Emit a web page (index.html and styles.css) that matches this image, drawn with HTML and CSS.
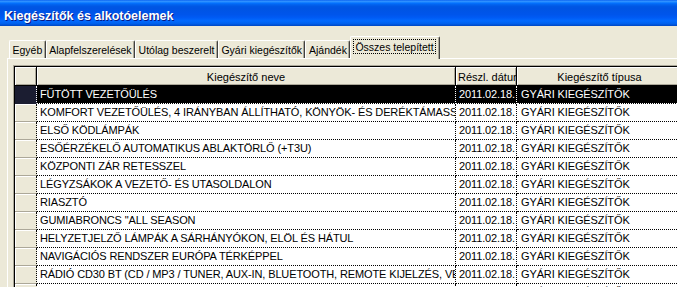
FILE: index.html
```html
<!DOCTYPE html>
<html lang="hu">
<head>
<meta charset="utf-8">
<title>Kiegészítők és alkotóelemek</title>
<link rel="stylesheet" href="styles.css">
</head>
<body>
<div class="window">
  <div class="titlebar">Kiegészítők és alkotóelemek</div>
  <div class="client">
    <div class="tabs">
      <div class="tab">Egyéb</div>
      <div class="tab">Alapfelszerelések</div>
      <div class="tab">Utólag beszerelt</div>
      <div class="tab">Gyári kiegészítők</div>
      <div class="tab">Ajándék</div>
      <div class="tab active"><span class="focus">Összes telepített</span></div>
    </div>
    <div class="pane">
      <div class="grid">
        <div class="grid-inner">
          <div class="row head">
            <div class="cell c-ind"></div>
            <div class="cell c-name center">Kiegészítő neve</div>
            <div class="cell c-date">Részl. dátuma</div>
            <div class="cell c-type center">Kiegészítő típusa</div>
          </div>
          <div class="row selected">
            <div class="cell c-ind"></div>
            <div class="cell c-name">FŰTÖTT VEZETŐÜLÉS</div>
            <div class="cell c-date">2011.02.18.</div>
            <div class="cell c-type">GYÁRI KIEGÉSZÍTŐK</div>
          </div>
          <div class="row">
            <div class="cell c-ind"></div>
            <div class="cell c-name">KOMFORT VEZETŐÜLÉS, 4 IRÁNYBAN ÁLLÍTHATÓ, KÖNYÖK- ÉS DERÉKTÁMASSZAL</div>
            <div class="cell c-date">2011.02.18.</div>
            <div class="cell c-type">GYÁRI KIEGÉSZÍTŐK</div>
          </div>
          <div class="row">
            <div class="cell c-ind"></div>
            <div class="cell c-name">ELSŐ KÖDLÁMPÁK</div>
            <div class="cell c-date">2011.02.18.</div>
            <div class="cell c-type">GYÁRI KIEGÉSZÍTŐK</div>
          </div>
          <div class="row">
            <div class="cell c-ind"></div>
            <div class="cell c-name">ESŐÉRZÉKELŐ AUTOMATIKUS ABLAKTÖRLŐ (+T3U)</div>
            <div class="cell c-date">2011.02.18.</div>
            <div class="cell c-type">GYÁRI KIEGÉSZÍTŐK</div>
          </div>
          <div class="row">
            <div class="cell c-ind"></div>
            <div class="cell c-name">KÖZPONTI ZÁR RETESSZEL</div>
            <div class="cell c-date">2011.02.18.</div>
            <div class="cell c-type">GYÁRI KIEGÉSZÍTŐK</div>
          </div>
          <div class="row">
            <div class="cell c-ind"></div>
            <div class="cell c-name">LÉGYZSÁKOK A VEZETŐ- ÉS UTASOLDALON</div>
            <div class="cell c-date">2011.02.18.</div>
            <div class="cell c-type">GYÁRI KIEGÉSZÍTŐK</div>
          </div>
          <div class="row">
            <div class="cell c-ind"></div>
            <div class="cell c-name">RIASZTÓ</div>
            <div class="cell c-date">2011.02.18.</div>
            <div class="cell c-type">GYÁRI KIEGÉSZÍTŐK</div>
          </div>
          <div class="row">
            <div class="cell c-ind"></div>
            <div class="cell c-name">GUMIABRONCS "ALL SEASON</div>
            <div class="cell c-date">2011.02.18.</div>
            <div class="cell c-type">GYÁRI KIEGÉSZÍTŐK</div>
          </div>
          <div class="row">
            <div class="cell c-ind"></div>
            <div class="cell c-name">HELYZETJELZŐ LÁMPÁK A SÁRHÁNYÓKON, ELÖL ÉS HÁTUL</div>
            <div class="cell c-date">2011.02.18.</div>
            <div class="cell c-type">GYÁRI KIEGÉSZÍTŐK</div>
          </div>
          <div class="row">
            <div class="cell c-ind"></div>
            <div class="cell c-name">NAVIGÁCIÓS RENDSZER EURÓPA TÉRKÉPPEL</div>
            <div class="cell c-date">2011.02.18.</div>
            <div class="cell c-type">GYÁRI KIEGÉSZÍTŐK</div>
          </div>
          <div class="row">
            <div class="cell c-ind"></div>
            <div class="cell c-name">RÁDIÓ CD30 BT (CD / MP3 / TUNER, AUX-IN, BLUETOOTH, REMOTE KIJELZÉS, VEZÉRLÉS)</div>
            <div class="cell c-date">2011.02.18.</div>
            <div class="cell c-type">GYÁRI KIEGÉSZÍTŐK</div>
          </div>
          <div class="row">
            <div class="cell c-ind"></div>
            <div class="cell c-name">TEMPOMAT</div>
            <div class="cell c-date">2011.02.18.</div>
            <div class="cell c-type">GYÁRI KIEGÉSZÍTŐK</div>
          </div>
        </div>
      </div>
    </div>
  </div>
</div>
</body>
</html>
```
FILE: styles.css
```css
html, body {
  margin: 0;
  padding: 0;
  width: 677px;
  height: 287px;
  overflow: hidden;
  background: #ece9d8;
  font-family: "Liberation Sans", Arial, sans-serif;
  color: #000;
}

.window {
  width: 677px;
  height: 287px;
  overflow: hidden;
}

.titlebar {
  height: 26px;
  box-sizing: border-box;
  padding: 8px 0 2px 4px;
  line-height: 16px;
  font-size: 12.5px;
  font-weight: bold;
  color: #fff;
  white-space: nowrap;
  text-shadow: 1px 1px #0a1883;
  background: linear-gradient(to bottom,
    #0058ee 0%, #3593ff 4%, #288eff 7%, #127dff 10%, #036ffc 13%,
    #0262ee 18%, #0057e5 25%, #0054e3 32%, #0055eb 56%, #005bf5 68%,
    #026afe 80%, #0062ef 90%, #0052d6 96%, #0046c0 100%);
}

.client {
  padding-top: 10px;
}

/* Tabs */
.tabs {
  display: flex;
  align-items: flex-end;
  height: 22px;
  padding-left: 9px;
}

.tab {
  height: 18px;
  box-sizing: border-box;
  padding: 2px 2.5px 0;
  line-height: 15px;
  font-size: 10.5px;
  white-space: nowrap;
  border-top: 1px solid #fff;
  border-left: 1px solid #fff;
  border-right: 1px solid #404040;
  border-radius: 2px 2px 0 0;
  box-shadow: inset -1px 0 #aca899;
  background: #ece9d8;
}

.tab.active {
  position: relative;
  z-index: 1;
  height: 23px;
  margin-bottom: -1px;
  padding: 2px 3px 0 2px;
}

.focus {
  display: inline-block;
  padding: 1px 1px 0;
  line-height: 12px;
  border: 1px dotted #000;
}

/* Tab pane */
.pane {
  margin-left: 7px;
  border-top: 1px solid #fff;
  border-left: 1px solid #fff;
  padding: 6px 0 0 5px;
}

/* Grid */
.grid {
  width: max-content;
  border-top: 1px solid #aca899;
  border-left: 1px solid #aca899;
  background: #fff;
}

.grid-inner {
  border-top: 1px solid #000;
  border-left: 1px solid #000;
}

.row {
  display: flex;
}

.cell {
  box-sizing: border-box;
  height: 18px;
  line-height: 17px;
  font-size: 11px;
  letter-spacing: -0.12px;
  white-space: nowrap;
  overflow: hidden;
  border-right: 1px dotted #000;
  border-bottom: 1px dotted #000;
}

.c-ind  { width: 22px; background: #ece9d8; box-shadow: inset 1px 1px #fff; border-bottom: 1px solid #aca899; }
.c-name { width: 419px; padding-left: 3px; }
.c-date { width: 61px; padding-left: 3px; }
.c-type { width: 166px; padding-left: 4px; }

.center { text-align: center; padding-left: 0; }

.row.head .cell {
  height: 19px;
  padding-top: 3px;
  line-height: 15px;
  letter-spacing: 0;
  background: #ece9d8;
  border-right: 1px solid #000;
  border-bottom: 1px solid #000;
  box-shadow: inset 1px 1px #fff, inset -1px -1px #aca899;
}

.row.head .c-date {
  padding-left: 2px;
}

.row.selected .cell {
  background: #000;
  color: #fff;
  border-right-color: #fff;
  border-bottom-color: #fff;
}

.row.selected .c-ind {
  background: #1b1d31;
  box-shadow: none;
  border-bottom: 1px solid #1b1d31;
}
```
